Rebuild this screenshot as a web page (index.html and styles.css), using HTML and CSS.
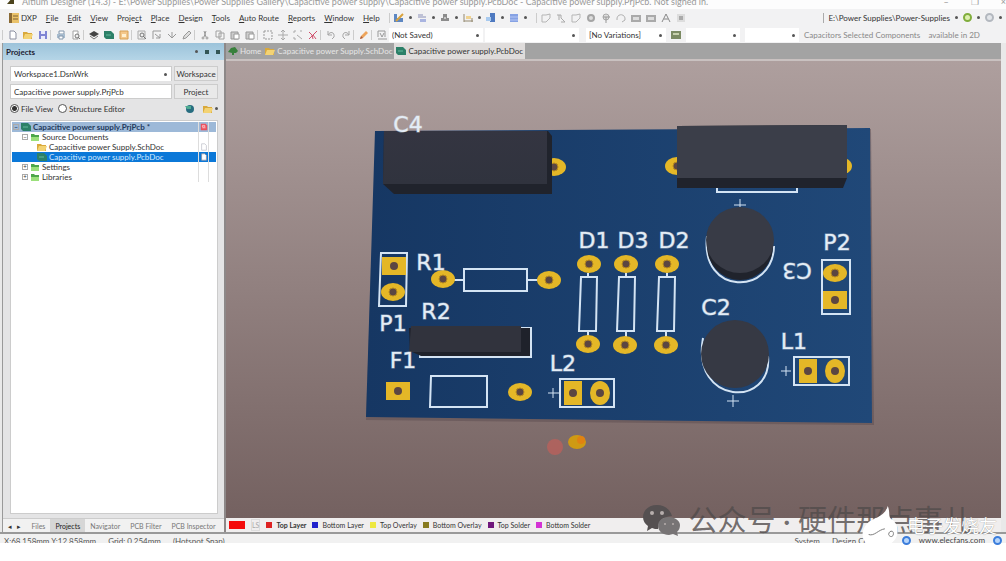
FILE: index.html
```html
<!DOCTYPE html>
<html lang="en">
  <head>
    <meta charset="UTF-8" />
    <meta name="viewport" content="width=device-width, initial-scale=1.0" />
    <title>Altium Designer</title>
    <link rel="stylesheet" href="styles.css">
  </head>
  <body>
    <svg class="sprite" aria-hidden="true">
      <symbol id="page" viewBox="0 0 10 10"><path d="M2 1h4l2 2v6H2z" fill="#fff" stroke="#8b8fa0"/></symbol>
      <symbol id="folder" viewBox="0 0 10 10"><path d="M0 2h4l1 1h4v6H0z" fill="#d9a93c"/><path d="M2 4h8L8 9H0z" fill="#f3d374"/></symbol>
      <symbol id="green-folder" viewBox="0 0 10 10"><path d="M1 2h3l1 1h4v6H1z" fill="#4da64a"/><path d="M1 5h8v4H1z" fill="#9be07b"/></symbol>
      <symbol id="save" viewBox="0 0 10 10"><path d="M1 1h8v8H1z" fill="#7f84d4"/><path d="M3 1h4v3H3zM3 6h4v3H3z" fill="#e9eafc"/></symbol>
      <symbol id="print" viewBox="0 0 10 10"><path d="M3 1h5v3H3z" fill="#fff" stroke="#8296ac"/><path d="M1 4h8v4H1z" fill="#a7bccf"/><path d="M3 6h4v3H3z" fill="#fff" stroke="#8296ac"/></symbol>
      <symbol id="preview" viewBox="0 0 10 10"><path d="M2 1h5v8H2z" fill="#fff" stroke="#a2a2a2"/><circle cx="6" cy="6" r="2" fill="#eee" stroke="#777"/><path d="M7 7l2 2" stroke="#777"/></symbol>
      <symbol id="layers" viewBox="0 0 10 10"><path d="M5 1l5 3-5 3-5-3z" fill="#444"/><path d="M1 6l4 3 4-3" fill="none" stroke="#777"/></symbol>
      <symbol id="board" viewBox="0 0 10 10"><path d="M0 1h7l3 3v5H2L0 7z" fill="#2c8068"/><path d="M2 5h5" stroke="#63b99b"/></symbol>
      <symbol id="chart" viewBox="0 0 10 10"><path d="M1 1h8v8H1z" fill="#f4c78a" stroke="#d6a055"/><path d="M3 4h4v3H3z" fill="#fff0d0"/></symbol>
      <symbol id="dxp" viewBox="0 0 10 10"><path d="M0 0h3v10H0z" fill="#8a6a35"/><path d="M3 0h7v10H3z" fill="#eac26a"/><path d="M4 3h5M4 6h5" stroke="#7d6034"/></symbol>
      <symbol id="zoom" viewBox="0 0 10 10"><path d="M1 1h7v8H1z" fill="#eee" stroke="#aaa"/><circle cx="5" cy="5" r="2" fill="none" stroke="#777"/><path d="M6 6l3 3" stroke="#777"/></symbol>
      <symbol id="select-zoom" viewBox="0 0 10 10"><path d="M1 9V1h8M3 4l5 4M8 4v4H4" fill="none" stroke="#999"/></symbol>
      <symbol id="down" viewBox="0 0 10 10"><path d="M1 4l4 4 4-4M5 2v5" fill="none" stroke="#999"/></symbol>
      <symbol id="pen" viewBox="0 0 10 10"><path d="M1 9l1-3 5-5 2 2-5 5z" fill="#ddd" stroke="#999"/></symbol>
      <symbol id="cut" viewBox="0 0 10 10"><path d="M4 1l2 6M6 1L4 7" stroke="#999"/><circle cx="3" cy="8" r="1" fill="none" stroke="#999"/><circle cx="7" cy="8" r="1" fill="none" stroke="#999"/></symbol>
      <symbol id="copy" viewBox="0 0 10 10"><path d="M1 1h5v6H1zM4 3h5v6H4z" fill="#f5f5f5" stroke="#a0a0a0"/></symbol>
      <symbol id="paste" viewBox="0 0 10 10"><path d="M1 2h7v7H1z" fill="#ccc" stroke="#999"/><path d="M4 4h5v5H4z" fill="#fff" stroke="#999"/></symbol>
      <symbol id="marquee" viewBox="0 0 10 10"><path d="M1 1h8v8H1z" fill="none" stroke="#999" stroke-dasharray="2 1"/></symbol>
      <symbol id="move" viewBox="0 0 10 10"><path d="M5 0v10M0 5h10M3 2l2-2 2 2M3 8l2 2 2-2" fill="none" stroke="#aaa"/></symbol>
      <symbol id="corners" viewBox="0 0 10 10"><path d="M1 3V1h2M7 1h2M1 7v2h2M4 5l5 4" fill="none" stroke="#aaa"/></symbol>
      <symbol id="clear" viewBox="0 0 10 10"><path d="M1 2l3 3 1 4M9 1L1 9M5 5l3 4" fill="none" stroke="#d0506c"/></symbol>
      <symbol id="undo" viewBox="0 0 10 10"><path d="M2 1v4h4M2 5c2-4 7-3 6 2L6 9" fill="none" stroke="#a5a5a5"/></symbol>
      <symbol id="redo" viewBox="0 0 10 10"><path d="M8 1v4H4M8 5C6 1 1 2 2 7l2 2" fill="none" stroke="#a5a5a5"/></symbol>
      <symbol id="pencil" viewBox="0 0 10 10"><path d="M1 9l1-3 5-5 2 2-5 5z" fill="#eda45b"/><path d="M1 9l1-3 2 2z" fill="#a85c42"/></symbol>
      <symbol id="wire" viewBox="0 0 10 10"><path d="M1 7V1h7v6M1 9h9M3 3l2 4 2-4" fill="none" stroke="#999"/></symbol>
      <symbol id="draw" viewBox="0 0 10 10"><path d="M0 1h3v8H0zM3 5h6v4H3z" fill="#5d87c2"/><path d="M2 8l7-7" stroke="#d9a23c" stroke-width="2"/></symbol>
      <symbol id="align" viewBox="0 0 10 10"><path d="M1 2h5M1 4h8" stroke="#8a90b8"/><path d="M3 6h6v3H3z" fill="#a9b4e0"/></symbol>
      <symbol id="find" viewBox="0 0 10 10"><path d="M3 1h4v4h2v3H1V5h2z" fill="#8c8c8c"/><path d="M4 5h2" stroke="#fff"/></symbol>
      <symbol id="dims" viewBox="0 0 10 10"><path d="M1 1v8M1 8h9M9 5v4" stroke="#948970" fill="none"/><path d="M3 3h5v3H3z" fill="#f0d391"/></symbol>
      <symbol id="rooms" viewBox="0 0 10 10"><path d="M4 0h5v9H4z" fill="#4e79c0"/><path d="M0 4h5v4H0z" fill="#a8caef"/></symbol>
      <symbol id="grid" viewBox="0 0 10 10"><path d="M1 1h8v8H1z" fill="#86a2e4"/><path d="M1 4h8M1 7h8" stroke="#b5c6f4"/></symbol>
      <symbol id="route" viewBox="0 0 10 10"><path d="M1 9V2h4l4-1v4L5 9z" fill="none" stroke="#b5b5b5"/></symbol>
      <symbol id="track" viewBox="0 0 10 10"><path d="M1 2h4v3l4 4H5M3 2v5" fill="none" stroke="#aaa"/></symbol>
      <symbol id="pad" viewBox="0 0 10 10"><circle cx="5" cy="5" r="3" fill="#ddd" stroke="#a5a5a5" stroke-width="2"/></symbol>
      <symbol id="via" viewBox="0 0 10 10"><circle cx="5" cy="4" r="3" fill="#ddd" stroke="#aaa"/><path d="M5 4v6M2 4h7" stroke="#999"/></symbol>
      <symbol id="arc" viewBox="0 0 10 10"><path d="M1 7C0 0 10 0 9 7L6 9" fill="none" stroke="#b0b0b0"/></symbol>
      <symbol id="fill" viewBox="0 0 10 10"><path d="M0 2h10v7H0z" fill="#aaa"/><path d="M2 4h6v3H2z" fill="#ddd"/></symbol>
      <symbol id="letter" viewBox="0 0 10 10"><path d="M1 9l4-8 4 8M3 6h4" fill="none" stroke="#888"/></symbol>
      <symbol id="block" viewBox="0 0 10 10"><path d="M1 1h8v8H1z" fill="#ddd"/><path d="M3 3h4v4H3z" fill="#aaa"/></symbol>
      <symbol id="chip" viewBox="0 0 10 10"><path d="M0 1h10v8H0z" fill="#7b8a63"/><path d="M2 3h6v2H2z" fill="#c6cfac"/></symbol>
      <symbol id="globe" viewBox="0 0 10 10"><circle cx="5" cy="5" r="4" fill="#286d80"/><path d="M0 2h6v3H2z" fill="#4eab92"/></symbol>
      <symbol id="home" viewBox="0 0 10 10"><path d="M0 6l3-4 4-1 3 4-2 2H6v2H4V7z" fill="#38803c"/></symbol>
      <symbol id="status" viewBox="0 0 10 10"><path d="M1 1h6l2 2v6H1z" fill="#e9505c"/><path d="M3 3h3v2H3zM3 6h4" fill="none" stroke="#ffc8cb"/></symbol>
    </svg>

    <header class="titlebar">
      <svg class="app-logo" viewBox="0 0 10 8"><path d="M1 6L6 0h2v6z" fill="#4b421c"/></svg>
      <span class="title">Altium Designer (14.3) - E:\Power Supplies\Power Supplies Gallery\Capacitive power supply\Capacitive power supply.PcbDoc - Capacitive power supply.PrjPcb. Not signed in.</span>
      <div class="window-buttons"><button aria-label="Minimize">–</button><button aria-label="Restore">❐</button><button aria-label="Close">×</button></div>
    </header>

    <nav class="menubar">
      <button class="dxp"><svg class="icon"><use href="#dxp"/></svg>DXP</button>
      <button><u>F</u>ile</button>
      <button><u>E</u>dit</button>
      <button><u>V</u>iew</button>
      <button>Proje<u>c</u>t</button>
      <button><u>P</u>lace</button>
      <button><u>D</u>esign</button>
      <button><u>T</u>ools</button>
      <button><u>A</u>uto Route</button>
      <button><u>R</u>eports</button>
      <button><u>W</u>indow</button>
      <button><u>H</u>elp</button>
      <div class="tools drops">
        <svg class="icon"><use href="#draw"/></svg><i></i>
        <svg class="icon"><use href="#align"/></svg><i></i>
        <svg class="icon"><use href="#find"/></svg><i></i>
        <svg class="icon"><use href="#dims"/></svg><i></i>
        <svg class="icon"><use href="#rooms"/></svg><i></i>
        <svg class="icon"><use href="#grid"/></svg><i></i>
      </div>
      <div class="tools">
        <svg class="icon"><use href="#route"/></svg>
        <svg class="icon"><use href="#track"/></svg>
        <svg class="icon"><use href="#route"/></svg>
        <svg class="icon"><use href="#pad"/></svg>
        <svg class="icon"><use href="#via"/></svg>
        <svg class="icon"><use href="#arc"/></svg>
        <svg class="icon"><use href="#fill"/></svg>
        <svg class="icon"><use href="#fill"/></svg>
        <svg class="icon"><use href="#letter"/></svg>
        <svg class="icon"><use href="#block"/></svg>
      </div>
      <div class="address">
        <span>E:\Power Supplies\Power-Supplies</span><i></i>
        <span class="ball green"></span><i></i><span class="ball"></span><i></i>
      </div>
    </nav>

    <div class="toolbar">
      <div class="tools">
        <svg class="icon"><use href="#page"/></svg>
        <svg class="icon"><use href="#folder"/></svg>
        <svg class="icon"><use href="#save"/></svg>
      </div>
      <div class="tools">
        <svg class="icon"><use href="#print"/></svg>
        <svg class="icon"><use href="#preview"/></svg>
      </div>
      <div class="tools">
        <svg class="icon"><use href="#layers"/></svg>
        <svg class="icon"><use href="#board"/></svg>
        <svg class="icon"><use href="#chart"/></svg>
      </div>
      <div class="tools">
        <svg class="icon"><use href="#zoom"/></svg>
        <svg class="icon"><use href="#select-zoom"/></svg>
        <svg class="icon"><use href="#down"/></svg>
        <svg class="icon"><use href="#pen"/></svg>
      </div>
      <div class="tools">
        <svg class="icon"><use href="#cut"/></svg>
        <svg class="icon"><use href="#copy"/></svg>
        <svg class="icon"><use href="#paste"/></svg>
        <svg class="icon"><use href="#paste"/></svg>
      </div>
      <div class="tools">
        <svg class="icon"><use href="#marquee"/></svg>
        <svg class="icon"><use href="#move"/></svg>
        <svg class="icon"><use href="#corners"/></svg>
        <svg class="icon"><use href="#clear"/></svg>
      </div>
      <div class="tools">
        <svg class="icon"><use href="#undo"/></svg>
        <svg class="icon"><use href="#redo"/></svg>
      </div>
      <div class="tools"><svg class="icon"><use href="#pencil"/></svg></div>
      <div class="tools"><svg class="icon"><use href="#wire"/></svg></div>
      <span class="combo wide"><select aria-label="Selection"><option>(Not Saved)</option></select></span>
      <span class="combo wide"><select aria-label="Filter"><option></option></select></span>
      <span class="combo variant"><select aria-label="Variant"><option>[No Variations]</option></select></span>
      <svg class="icon"><use href="#chip"/></svg>
      <span class="combo short"><select aria-label="Net"><option></option></select></span>
      <span class="combo short"><select aria-label="Component"><option></option></select></span>
      <span class="hint">Capacitors Selected Components &nbsp;&nbsp; available in 2D</span>
    </div>

    <main class="workspace">
      <aside class="panel">
        <h2>Projects <span class="pins"><i></i><b></b><b></b></span></h2>
        <div class="panel-body">
          <div class="field-row">
            <span class="combo"><select aria-label="Workspace"><option>Workspace1.DsnWrk</option></select></span>
            <button>Workspace</button>
          </div>
          <div class="field-row">
            <input type="text" aria-label="Project" value="Capacitive power supply.PrjPcb" />
            <button>Project</button>
          </div>
          <div class="view-row">
            <label><input type="radio" name="view" checked />File View</label>
            <label><input type="radio" name="view" />Structure Editor</label>
            <span class="view-icons">
              <svg class="icon"><use href="#globe"/></svg>
              <svg class="icon"><use href="#folder"/></svg><i></i>
            </span>
          </div>
          <ul class="tree">
            <li class="root"><span class="box">−</span><svg class="icon"><use href="#board"/></svg><span class="name">Capacitive power supply.PrjPcb *</span><span class="cell"><svg class="icon"><use href="#status"/></svg></span><span class="cell"></span></li>
            <li class="level-1"><span class="box">−</span><svg class="icon"><use href="#green-folder"/></svg><span class="name">Source Documents</span><span class="cell"></span><span class="cell"></span></li>
            <li class="level-2"><svg class="icon"><use href="#folder"/></svg><span class="name">Capacitive power Supply.SchDoc</span><span class="cell"><svg class="icon dim"><use href="#page"/></svg></span><span class="cell"></span></li>
            <li class="level-2 selected"><svg class="icon"><use href="#board"/></svg><span class="name">Capacitive power supply.PcbDoc</span><span class="cell"><svg class="icon"><use href="#page"/></svg></span><span class="cell"></span></li>
            <li class="level-1"><span class="box">+</span><svg class="icon"><use href="#green-folder"/></svg><span class="name">Settings</span><span class="cell"></span><span class="cell"></span></li>
            <li class="level-1"><span class="box">+</span><svg class="icon"><use href="#green-folder"/></svg><span class="name">Libraries</span><span class="cell"></span><span class="cell"></span></li>
          </ul>
        </div>
        <nav class="panel-tabs">
          <span class="arrows">◂ &nbsp; ▸</span>
          <button>Files</button>
          <button class="active">Projects</button>
          <button>Navigator</button>
          <button>PCB Filter</button>
          <button>PCB Inspector</button>
          <button>P</button>
        </nav>
      </aside>

      <section class="editor">
        <nav class="doc-tabs">
          <button><svg class="icon"><use href="#home"/></svg>Home</button>
          <button><svg class="icon"><use href="#folder"/></svg>Capacitive power Supply.SchDoc</button>
          <button class="active"><svg class="icon"><use href="#board"/></svg>Capacitive power supply.PcbDoc</button>
        </nav>
        <div class="canvas">
          <svg class="pcb" viewBox="226 61 775 457" preserveAspectRatio="xMidYMid slice">
            <defs>
              <linearGradient id="body-top" x1="0" y1="0" x2="0" y2="1"><stop offset="0" stop-color="#343541"/><stop offset="1" stop-color="#30333e"/></linearGradient>
              <linearGradient id="solder" x1="0" y1="0" x2="1" y2="0"><stop offset="0" stop-color="#163763"/><stop offset="1" stop-color="#204878"/></linearGradient>
              <g id="round-pad"><ellipse rx="12" ry="9" fill="#e4b727"/><circle r="4" fill="#5b4642"/><circle r="4" fill="none" stroke="#b88b1e"/></g>
              <g id="tall-pad"><ellipse rx="10" ry="12" fill="#e4b727"/><circle r="4" fill="#5b4642"/></g>
              <g id="square-pad"><rect x="-12" y="-9" width="24" height="18" fill="#e4b727"/><circle r="4" fill="#5b4642"/></g>
              <g id="tall-square"><rect x="-9" y="-12" width="18" height="24" fill="#e4b727"/><circle r="4" fill="#5b4642"/></g>
            </defs>

            <path d="M376 132L871 129L874 425L366 420z" fill="#5b4b50" opacity=".5"/>
            <path d="M375 131L870 128L872 423L366 417z" fill="url(#solder)"/>

            <!-- silkscreen outlines -->
            <g fill="none" stroke="#d4e4f4" stroke-width="2">
              <path d="M381 253h26l-1 53h-27z"/>
              <path d="M464 269h63v22h-63zM454 280h10M527 280h12"/>
              <path d="M420 354v3h111v-29h-10"/>
              <path d="M431 376h56v31h-57z"/>
              <path d="M560 379h54v28h-54z"/>
              <path d="M581 277h16l-1 54h-17zM619 277h16l-1 54h-17zM659 277h16l-1 54h-17z"/>
              <path d="M588 273v4M588 331v6M626 273v4M626 331v6M667 273v4M666 331v6"/>
              <path d="M717 188v4h80v-4"/>
              <path d="M822 260h28v54h-28zM794 357h55v28h-55z"/>
              <path d="M707 236c-7 60 66 60 67 10M703 338c-12 68 70 70 65 18"/>
            </g>
            <path d="M548 393h11M553 388v10M734 205h12M740 199v8M781 371h10M786 366v10M727 401h12M733 395v12" stroke="#d4e4f4"/>

            <!-- pads -->
            <use href="#round-pad" x="554" y="167"/>
            <use href="#round-pad" x="677" y="166"/>
            <use href="#round-pad" x="840" y="166"/>
            <use href="#square-pad" x="394" y="266"/>
            <use href="#round-pad" x="393" y="292"/>
            <use href="#round-pad" x="443" y="279"/>
            <use href="#round-pad" x="549" y="280"/>
            <use href="#square-pad" x="398" y="391"/>
            <use href="#round-pad" x="520" y="392"/>
            <use href="#tall-square" x="573" y="393"/>
            <use href="#tall-pad" x="600" y="393"/>
            <use href="#round-pad" x="589" y="264"/>
            <use href="#round-pad" x="626" y="264"/>
            <use href="#round-pad" x="667" y="264"/>
            <use href="#round-pad" x="588" y="344"/>
            <use href="#round-pad" x="625" y="345"/>
            <use href="#round-pad" x="666" y="345"/>
            <use href="#round-pad" x="835" y="273"/>
            <use href="#square-pad" x="835" y="300"/>
            <use href="#tall-square" x="808" y="371"/>
            <use href="#tall-pad" x="835" y="371"/>

            <!-- component bodies -->
            <path d="M384 131h164l4 5v58H394l-11-10z" fill="#20232c"/>
            <path d="M384 131h163v53H383z" fill="url(#body-top)"/>
            <path d="M677 126l170-1v53l-4 10H677z" fill="#20232c"/>
            <path d="M677 126l170-1v53H677z" fill="#3b3e49"/>
            <path d="M409 328h121v28H421l-11-5z" fill="#1f222b"/>
            <path d="M411 326h110v26H409z" fill="#31333d"/>
            <ellipse cx="740" cy="246" rx="33" ry="34" fill="#20232c"/>
            <ellipse cx="740" cy="240" rx="34" ry="33" fill="#383b46"/>
            <circle cx="735" cy="354" r="34" fill="#363944"/>

            <g class="designators">
              <text x="408" y="132">C4</text>
              <text x="431" y="270">R1</text>
              <text x="436" y="319">R2</text>
              <text x="393" y="331">P1</text>
              <text x="403" y="368">F1</text>
              <text x="594" y="248">D1</text>
              <text x="633" y="248">D3</text>
              <text x="674" y="248">D2</text>
              <text x="837" y="250">P2</text>
              <text x="797" y="279" transform="rotate(180 797 271)">C3</text>
              <text x="716" y="315">C2</text>
              <text x="794" y="349">L1</text>
              <text x="563" y="371">L2</text>
            </g>

            <ellipse cx="555" cy="447" rx="8" ry="8" fill="#c2605a" opacity=".7"/>
            <ellipse cx="577" cy="442" rx="9" ry="7" fill="#cf9a13"/>
            <circle cx="581" cy="440" r="4" fill="#e08212"/>
          </svg>
        </div>
        <div class="layer-bar">
          <span class="current"></span>
          <button class="ls">LS</button>
          <button class="active"><span class="swatch top"></span>Top Layer</button>
          <button><span class="swatch bottom"></span>Bottom Layer</button>
          <button><span class="swatch top-overlay"></span>Top Overlay</button>
          <button><span class="swatch bottom-overlay"></span>Bottom Overlay</button>
          <button><span class="swatch top-solder"></span>Top Solder</button>
          <button><span class="swatch bottom-solder"></span>Bottom Solder</button>
        </div>
      </section>
    </main>

    <footer class="statusbar">
      <span>X:68.158mm Y:12.858mm</span>
      <span>Grid: 0.254mm</span>
      <span>(Hotspot Snap)</span>
      <span class="right">System</span>
      <span>Design Co</span>
    </footer>

    <div class="watermark">
      <svg viewBox="0 0 38 31">
        <path d="M14 0C6 0 0 5 0 12c0 4 2 7 5 9l-1 5 5-3c2 1 4 1 6 1 0-8 6-13 14-13C27 4 21 0 14 0z" fill="#555051"/>
        <path d="M26 12c-7 0-11 4-11 9s5 9 11 9l4-1 5 2-1-4c2-2 3-4 3-7 0-4-5-8-11-8z" fill="#777475"/>
        <g fill="#b6aead"><circle cx="9" cy="8" r="2"/><circle cx="19" cy="8" r="2"/><circle cx="22" cy="19" r="1"/><circle cx="30" cy="19" r="1"/></g>
      </svg>
      <span>公众号 · 硬件那点事儿</span>
    </div>
    <div class="brand">
      <svg viewBox="0 0 42 40">
        <path d="M27 0c3 7 0 11 4 14 8 5 8 16 3 22l-4 4H5C-2 32 0 24 6 18c4-5 18-6 21-18z" fill="#fff"/>
        <path d="M7 30c6 2 10-5 17-6M28 30c0-4 5-5 5-1s-4 4-5 1" fill="none" stroke="#777"/>
      </svg>
      <div class="brand-text">
        <strong>电子发烧友</strong>
        <span class="site"><b></b>www.elecfans.com<b></b></span>
      </div>
    </div>
  </body>
</html>
```
FILE: styles.css
```css
* {
  box-sizing: border-box;
}

body {
  position: relative;
  display: flex;
  flex-direction: column;
  min-height: 100vh;
  margin: 0;
  padding-bottom: 18px;
  overflow: hidden;
  background: #fff;
  color: #333;
  font: 8px/10px Lato, "Noto Sans CJK SC", sans-serif;
}

button, input, select {
  margin: 0;
  padding: 0;
  border: 0;
  background: none;
  color: inherit;
  font: inherit;
}

.sprite {
  position: absolute;
  width: 0;
  height: 0;
}

.icon {
  flex: none;
  display: block;
  width: 10px;
  height: 10px;
}

.dim {
  opacity: .5;
}

/* small drop-down marks */
i {
  flex: none;
  width: 3px;
  height: 3px;
  border-radius: 50%;
  background: #555;
}

.titlebar {
  display: flex;
  align-items: center;
  height: 9px;
  padding: 0 0 5px 6px;
  overflow: hidden;
  background: #fdfdfd;
  color: #999;
  font-size: 9px;
}

.app-logo {
  width: 10px;
  height: 8px;
  margin-right: 6px;
}

.title {
  white-space: nowrap;
}

.window-buttons {
  display: flex;
  gap: 22px;
  margin-left: auto;
}

.menubar, .toolbar {
  display: flex;
  align-items: center;
  height: 17px;
  background: #f2f2f3;
  white-space: nowrap;
}

.menubar {
  gap: 9px;
  padding: 0 4px 0 9px;
}

.menubar u {
  text-underline-offset: 1px;
}

.dxp {
  display: flex;
  gap: 2px;
}

.tools {
  display: flex;
  align-items: center;
  gap: 5px;
  padding-left: 5px;
  border-left: 1px solid #ccc;
}

.menubar .tools {
  padding-left: 4px;
}

.address {
  display: flex;
  align-items: center;
  gap: 5px;
  margin-left: auto;
  padding-left: 4px;
  border-left: 1px solid #aaa;
}

.ball {
  width: 9px;
  height: 9px;
  border: 2px solid #b3b8bf;
  border-radius: 50%;
  background: #e2e5e9;
}

.ball.green {
  border-color: #80ad3c;
  background: #dcefad;
}

.toolbar {
  gap: 2px;
  padding: 0 4px 0 2px;
}

.combo {
  position: relative;
  display: block;
}

.combo select {
  display: block;
  width: 100%;
  height: 14px;
  padding: 0 3px;
  appearance: none;
  background: #fff;
}

.combo::after {
  content: "";
  position: absolute;
  top: 6px;
  right: 4px;
  width: 3px;
  height: 3px;
  background: #555;
  border-radius: 50%;
}

.combo.wide {
  width: 94px;
}

.combo.variant {
  width: 80px;
  margin: 0 3px 0 5px;
}

.combo.short {
  width: 54px;
  margin-left: 3px;
}

.hint {
  margin-left: 3px;
  color: #888;
}

.workspace {
  flex: 1;
  display: flex;
  min-height: 0;
  padding: 0 5px 0 2px;
  border-bottom: 2px solid #999;
  background: #e9e9e9;
}

.panel {
  flex: none;
  display: flex;
  flex-direction: column;
  width: 224px;
  border-right: 2px solid #8d8888;
  border-left: 1px solid #999;
  background: #e4e4e5;
}

.panel h2 {
  display: flex;
  align-items: center;
  height: 17px;
  margin: 0;
  padding: 0 4px 0 3px;
  background: linear-gradient(#9cc3da, #b5d5e7);
  font-size: 8px;
  color: #223;
}

.pins {
  display: flex;
  align-items: center;
  gap: 7px;
  margin-left: auto;
}

.pins b {
  width: 4px;
  height: 4px;
  background: #355;
}

.panel-body {
  flex: 1;
  display: flex;
  flex-direction: column;
  gap: 3px;
  padding: 6px 6px 4px 7px;
}

.field-row {
  display: flex;
  gap: 2px;
  height: 15px;
}

.field-row .combo, .field-row input {
  flex: 1;
  min-width: 0;
  border: 1px solid #ccc;
  background: #fff;
}

.field-row input {
  padding: 0 3px;
}

.field-row button {
  width: 44px;
  border: 1px solid #ccc;
  background: #e9e9e9;
}

.view-row {
  display: flex;
  align-items: center;
  gap: 5px;
  height: 13px;
}

.view-row label {
  display: flex;
  align-items: center;
  gap: 2px;
}

.view-row input {
  width: 9px;
  height: 9px;
  appearance: none;
  border: 1px solid #555;
  border-radius: 50%;
  background: #fff;
}

.view-row input:checked {
  background: radial-gradient(#333 2px, #fff 3px);
}

.view-icons {
  display: flex;
  align-items: center;
  gap: 8px;
  margin-left: auto;
}

.view-icons .icon + i {
  margin-left: -6px;
}

.tree {
  flex: 1;
  margin: 2px 0 0;
  padding: 1px;
  border: 1px solid #ccc;
  background: #fff;
  list-style: none;
}

.tree li {
  display: flex;
  align-items: center;
  gap: 2px;
  height: 10px;
  padding-left: 1px;
  white-space: nowrap;
}

.tree .level-1 {
  padding-left: 10px;
}

.tree .level-2 {
  padding-left: 25px;
}

.box {
  width: 6px;
  height: 6px;
  border: 1px solid #aaa;
  font-size: 6px;
  line-height: 4px;
  text-align: center;
}

.name {
  flex: 1;
}

.cell {
  display: flex;
  justify-content: center;
  width: 10px;
  height: 10px;
  margin-right: -2px;
  border-left: 1px solid #ddd;
}

.cell .icon {
  width: 8px;
}

.tree .root {
  background: #9db9d8;
  color: #223a5c;
  font-weight: bold;
}

.tree .selected {
  background: #0b78d8;
  color: #d4eaff;
}

.panel-tabs {
  display: flex;
  align-items: center;
  height: 14px;
  overflow: hidden;
  border-top: 1px solid #ccc;
  background: #f1f1f1;
  color: #777;
  font-size: 7px;
  white-space: nowrap;
}

.panel-tabs button {
  height: 13px;
  padding: 0 5px;
}

.panel-tabs .active {
  background: #d6d6d6;
  color: #222;
}

.arrows {
  padding: 0 5px;
  color: #333;
}

.editor {
  flex: 1;
  display: flex;
  flex-direction: column;
  min-width: 0;
}

.doc-tabs {
  display: flex;
  height: 18px;
  border-bottom: 2px solid #c9c1c0;
  background: #a3a3a3;
  color: #e6e6e6;
}

.doc-tabs button {
  display: flex;
  align-items: center;
  gap: 2px;
  padding: 0 2px;
  white-space: nowrap;
}

.doc-tabs .active {
  background: #dfdcdb;
  color: #333;
}

.canvas {
  flex: 1;
  position: relative;
  min-height: 0;
  background: linear-gradient(#ae9f9e, #746160);
}

.pcb {
  position: absolute;
  inset: 0;
  width: 100%;
  height: 100%;
}

.designators {
  fill: #e4edf6;
  stroke: #e4edf680;
  font: 22px "DejaVu Sans", sans-serif;
  text-anchor: middle;
}

.layer-bar {
  display: flex;
  align-items: center;
  gap: 6px;
  height: 14px;
  padding-left: 3px;
  background: #f0eeee;
  font-size: 7px;
  white-space: nowrap;
}

.layer-bar button {
  display: flex;
  align-items: center;
  gap: 4px;
}

.layer-bar .active {
  font-weight: bold;
}

.layer-bar .ls {
  border: 1px solid #ddd;
  color: #aaa;
}

.current {
  width: 16px;
  height: 8px;
  background: #f40b0b;
}

.swatch {
  width: 6px;
  height: 6px;
}

.top { background: #d22; }
.bottom { background: #22c; }
.top-overlay { background: #eee840; }
.bottom-overlay { background: #887b20; }
.top-solder { background: #70187c; }
.bottom-solder { background: #d433d4; }

.statusbar {
  display: flex;
  gap: 12px;
  height: 9px;
  padding: 2px 138px 0 4px;
  overflow: hidden;
  background: #f1f1f1;
  color: #555;
  white-space: nowrap;
}

.statusbar .right {
  margin-left: auto;
}

/* marks laid over the lower right corner */
.watermark {
  position: absolute;
  right: 34px;
  bottom: 25px;
  display: flex;
  align-items: center;
  gap: 8px;
  color: #514b4bcc;
  font-size: 29px;
  line-height: 32px;
  white-space: nowrap;
}

.watermark svg {
  width: 38px;
  height: 31px;
}

.brand {
  position: absolute;
  right: 4px;
  bottom: 16px;
  display: flex;
  align-items: flex-end;
  color: #fff;
}

.brand svg {
  width: 40px;
  height: 40px;
}

.brand-text {
  display: flex;
  flex-direction: column;
  align-items: center;
}

.brand strong {
  font-size: 18px;
  font-weight: normal;
  line-height: 18px;
  text-shadow: 0 0 1px #777;
}

.site {
  display: flex;
  align-items: center;
  gap: 8px;
  color: #444;
}

.site b {
  width: 9px;
  height: 9px;
  border: 2px solid #3b7ddb;
  border-radius: 50%;
  background: #b7d5fa;
}
```
